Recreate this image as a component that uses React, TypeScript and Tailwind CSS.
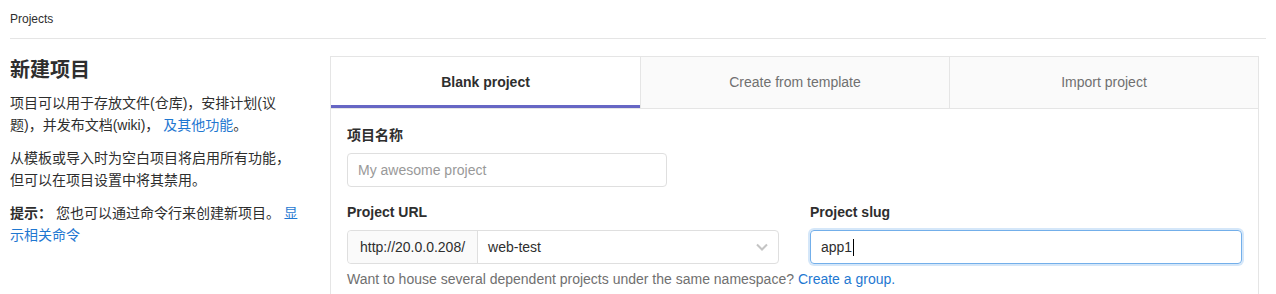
import React from 'react';

const font = { fontFamily: '"Liberation Sans", "Noto Sans CJK SC", sans-serif' };

const tabs = [
    { label: 'Blank project', active: true },
    { label: 'Create from template', active: false },
    { label: 'Import project', active: false }
];

const NewProject = () => {
    return (
        <div className="bg-white min-h-[294px] text-[#2e2e2e]" style={font}>
            {/* Breadcrumb */}
            <div className="mx-[10px] h-[39px] border-b border-[#e5e5e5] flex items-center">
                <span className="text-[12px] leading-none">Projects</span>
            </div>

            <div className="flex pt-[16px] px-[10px] pr-[17px]">
                {/* Left description */}
                <div className="w-[291px] shrink-0 mr-[29px] text-[14px] leading-[22px]">
                    <h4 className="text-[20px] font-bold leading-[28px] mt-[1px] mb-[8px]">新建项目</h4>
                    <p className="mb-[11px]">
                        项目可以用于存放文件(仓库)，安排计划(议题)，并发布文档(wiki)，{' '}
                        <a className="text-[#1f78d1]">及其他功能</a>。
                    </p>
                    <p className="mb-[11px]">从模板或导入时为空白项目将启用所有功能，但可以在项目设置中将其禁用。</p>
                    <p>
                        <strong>提示：</strong> 您也可以通过命令行来创建新项目。{' '}
                        <a className="text-[#1f78d1]">显示相关命令</a>
                    </p>
                </div>

                {/* Right panel */}
                <div className="flex-1 border border-[#e5e5e5] border-b-0 mt-[1px]">
                    <div className="grid grid-cols-3 border-b border-[#e5e5e5]">
                        {tabs.map((tab, idx) => (
                            <div
                                key={idx}
                                className={`h-[51px] flex items-center justify-center text-[14px] ${
                                    tab.active
                                        ? 'bg-white font-bold text-[#2e2e2e] border-b-[3px] border-[#6666c4] pt-[3px]'
                                        : 'bg-[#fafafa] text-[#707070] border-l border-[#e5e5e5]'
                                }`}
                            >
                                {tab.label}
                            </div>
                        ))}
                    </div>

                    <div className="pt-[16px] px-4 pb-4 text-[14px]">
                        <div className="mb-[15px]">
                            <label className="block font-bold leading-[20px] mb-[8px]">项目名称</label>
                            <div className="w-[320px] h-[34px] border border-[#dfdfdf] rounded-[4px] px-[10px] flex items-center text-[#999]">
                                My awesome project
                            </div>
                        </div>

                        <div className="grid grid-cols-2 gap-[31px]">
                            <div>
                                <label className="block font-bold leading-[20px] mb-[8px]">Project URL</label>
                                <div className="flex h-[34px] border border-[#dfdfdf] rounded-[4px]">
                                    <div className="bg-[#fafafa] border-r border-[#dfdfdf] px-[12px] flex items-center rounded-l-[4px]">
                                        http://20.0.0.208/
                                    </div>
                                    <div className="flex-1 flex items-center justify-between px-[10px]">
                                        <span>web-test</span>
                                        <svg width="12" height="8" viewBox="0 0 12 8" fill="none" stroke="#c4c4c4" strokeWidth="2">
                                            <path d="M1 1.5l5 5 5-5" />
                                        </svg>
                                    </div>
                                </div>
                                <div className="mt-[5px] leading-[20px] whitespace-nowrap text-[#707070]">
                                    Want to house several dependent projects under the same namespace?{' '}
                                    <a className="text-[#1f78d1]">Create a group.</a>
                                </div>
                            </div>
                            <div>
                                <label className="block font-bold leading-[20px] mb-[8px]">Project slug</label>
                                <div className="h-[34px] border border-[#73afea] rounded-[4px] px-[10px] flex items-center shadow-[0_0_0_2px_rgba(115,175,234,0.3)]">
                                    app1
                                    <span className="inline-block w-px h-[17px] bg-black ml-[1px]" />
                                </div>
                            </div>
                        </div>
                    </div>
                </div>
            </div>
        </div>
    );
};

export default function App() {
    return <NewProject />;
}
